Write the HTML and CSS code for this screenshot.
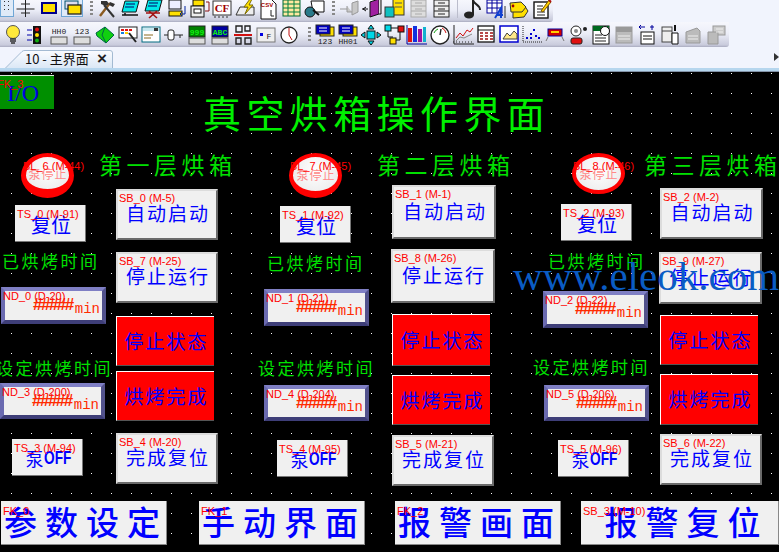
FILE: index.html
```html
<!DOCTYPE html>
<html lang="zh">
<head>
<meta charset="utf-8">
<title>主界面</title>
<link rel="stylesheet" href="styles.css">
</head>
<body>
<div class="app">
<header class="toolbars">
<div class="bar bar-top">
<div class="tool sel narrow"><svg viewBox="0 0 22 22"><g fill="#333"><rect x="0" y="-1" width="1" height="1"/><rect x="4" y="-1" width="1" height="1"/><rect x="8" y="-1" width="1" height="1"/><rect x="0" y="3" width="1" height="1"/><rect x="4" y="3" width="1" height="1"/><rect x="8" y="3" width="1" height="1"/><rect x="0" y="7" width="1" height="1"/><rect x="4" y="7" width="1" height="1"/><rect x="8" y="7" width="1" height="1"/><rect x="0" y="11" width="1" height="1"/><rect x="4" y="11" width="1" height="1"/><rect x="8" y="11" width="1" height="1"/></g></svg></div>
<div class="tool"><svg viewBox="0 0 22 22"><path d="M1.500 11h18M10.500 2v17M6 6h9M6 15h9" stroke="#222" fill="none"/></svg></div>
<div class="tool"><svg viewBox="0 0 22 22"><rect x="4" y="5" width="14" height="10" fill="#ffe000" stroke="#00008c" stroke-width="2"/></svg></div>
<div class="tool sel"><svg viewBox="0 0 22 22"><rect x="4" y="3" width="13" height="8" fill="#dde" stroke="#00506c"/><rect x="7" y="7" width="13" height="9" fill="#ffe000" stroke="#222" stroke-width="1.300"/></svg></div>
<i class="grip"></i>
<div class="tool"><svg viewBox="0 0 22 22"><path d="M4 18L14 5" stroke="#8a5a20" stroke-width="2.400"/><path d="M18 19L8 7" stroke="#333" stroke-width="2"/><path d="M5 3h6l2 3-3 2-5-2zM14 4l5 2-2 3-4-2z" fill="#333"/></svg></div>
<div class="tool"><svg viewBox="0 0 22 22"><path d="M6 3h14l-3 11H3z" fill="#00e8e8" stroke="#111"/><path d="M7 6h9M6 9h9" stroke="#006"/><path d="M3 17h16M6 15v2" stroke="#111" stroke-width="1.500"/></svg></div>
<div class="tool"><svg viewBox="0 0 22 22"><path d="M6 2h14l-3 11H3z" fill="#00e8e8" stroke="#111"/><path d="M7 5h9M6 8h9" stroke="#006"/><path d="M4 15h14M7 13l8 7M15 13l-8 7" stroke="#a01010" stroke-width="1.600"/></svg></div>
<div class="tool"><svg viewBox="0 0 22 22"><rect x="4" y="2" width="12" height="9" fill="#eef" stroke="#111"/><rect x="4" y="13" width="13" height="5" fill="#ffe000" stroke="#111"/><path d="M20 8v8h-3M17 14l-2 2 2 2" stroke="#00209c" fill="none"/></svg></div>
<div class="tool"><svg viewBox="0 0 22 22"><rect x="5" y="2" width="11" height="6" fill="#ffe000" stroke="#111"/><rect x="3" y="8" width="13" height="11" fill="#eee" stroke="#111"/><rect x="6" y="11" width="7" height="4" fill="#fff" stroke="#111"/><path d="M18 4h3v9h-4" stroke="#8c1010" fill="none"/></svg></div>
<div class="tool"><svg viewBox="0 0 22 22"><rect x="2" y="3" width="18" height="14" fill="#fff" stroke="#333"/><text class="ico-cf" x="11" y="14">CF</text><path d="M4 18v2M8 18v2M12 18v2M16 18v2" stroke="#333"/></svg></div>
<div class="tool"><svg viewBox="0 0 22 22"><path d="M2 17l4-8h14v8z" fill="#eee" stroke="#333"/><path d="M16 1l-6 8h4l-3 7 8-9h-4l3-6z" fill="#ffe000" stroke="#7a6a00"/></svg></div>
<div class="tool"><svg viewBox="0 0 22 22"><path d="M4 1h10l5 5v15H4z" fill="#fff" stroke="#111"/><text class="ico-csv" x="10" y="9">CSV</text><path d="M14 12v6h3" stroke="#222" fill="none"/></svg></div>
<div class="tool"><svg viewBox="0 0 22 22"><rect x="3" y="2" width="17" height="16" fill="#ffe9a0" stroke="#063"/><path d="M3 6h17M3 10h17M3 14h17M8 2v16M14 2v16" stroke="#008040"/></svg></div>
<div class="tool"><svg viewBox="0 0 22 22"><path d="M8 3h13v11H10z" fill="#fff" stroke="#111"/><circle cx="7" cy="14" r="5" fill="#2a7a8a" stroke="#111"/><path d="M10 12l6 5" stroke="#111" stroke-width="2"/></svg></div>
<i class="grip"></i>
<div class="tool"><svg viewBox="0 0 22 22"><path d="M2 11h7M9 8v6h5M14 5v12l6-3V3z" fill="#c8c8c8" stroke="#999"/></svg></div>
<div class="tool"><svg viewBox="0 0 22 22"><path d="M1 11h6M5 9l-3 2 3 2" stroke="#111" fill="none"/><path d="M9 4l9-3v15l-9 3z" fill="#a020a0" stroke="#111"/><path d="M18 1h2v15h-2" fill="#ddd" stroke="#111"/></svg></div>
<div class="tool"><svg viewBox="0 0 22 22"><rect x="9" y="1" width="11" height="16" fill="#ffe000" stroke="#333"/><path d="M11 5h7M11 9h7" stroke="#555"/><rect x="1" y="9" width="9" height="10" fill="#10c0c0" stroke="#333"/></svg></div>
<div class="tool"><svg viewBox="0 0 22 22"><rect x="4" y="2" width="15" height="17" fill="#ddd" stroke="#aaa"/><path d="M4 8h15M4 13h15M8 5h7M8 11h7M8 16h7" stroke="#aaa"/></svg></div>
<div class="tool"><svg viewBox="0 0 22 22"><rect x="4" y="2" width="15" height="17" fill="#eee" stroke="#222"/><path d="M4 8h15M4 13h15M8 5h7M8 11h7M8 16h7" stroke="#222"/></svg></div>
<i class="sep"></i>
<div class="tool"><svg viewBox="0 0 22 22"><ellipse cx="7" cy="17" rx="5" ry="3.400" fill="#222"/><path d="M11 17V2c1 5 7 4 7 10" stroke="#222" stroke-width="2" fill="none"/></svg></div>
<div class="tool"><svg viewBox="0 0 22 22"><rect x="2" y="2" width="15" height="13" fill="#fff" stroke="#00009c"/><path d="M2 5h15M7 2v13M12 2v13M2 10h15" stroke="#00009c"/><path d="M10 20l6-10v10M12 17h6" stroke="#1040d0" stroke-width="2" fill="none"/><path d="M20 8v12" stroke="#333"/></svg></div>
<div class="tool"><svg viewBox="0 0 22 22"><path d="M6 6l11-1 4 6-4 6-11 1z" fill="#ffe000" stroke="#333" transform="translate(-1 2)"/><path d="M2 5l11-1 5 5-4 5H3z" fill="#ffe000" stroke="#333"/><circle cx="5" cy="8" r="1.400" fill="#a00000"/></svg></div>
<div class="tool"><svg viewBox="0 0 22 22"><rect x="3" y="4" width="14" height="16" fill="#fff" stroke="#111" stroke-width="1.400"/><path d="M6 8h6M6 11h8M6 14h8M6 17h8" stroke="#222"/><path d="M10 13L18 2l2 2-8 10z" fill="#ffd000" stroke="#7a5500"/><path d="M18 2l2 2" stroke="#b01010" stroke-width="2"/></svg></div>
</div>
<div class="bar bar-bottom">
<i class="pad"></i>
<div class="tool"><svg viewBox="0 0 22 22"><circle cx="11" cy="8" r="6.500" fill="#ffe83a" stroke="#555"/><path d="M8 15h6M8 17h6M9 19h4" stroke="#333" stroke-width="1.300"/></svg></div>
<div class="tool"><svg viewBox="0 0 22 22"><rect x="8" y="2" width="8" height="18" fill="#111"/><circle cx="12" cy="5.500" r="2" fill="#e01010"/><circle cx="12" cy="11" r="2" fill="#ffe000"/><circle cx="12" cy="16.500" r="2" fill="#10b010"/><path d="M2 6h5M2 11h5M2 16h5" stroke="#00a"/></svg></div>
<div class="tool"><svg viewBox="0 0 22 22"><text class="ico-k" x="11" y="10">HH0</text><rect x="3" y="13" width="16" height="7" fill="#ddd" stroke="#555"/></svg></div>
<div class="tool"><svg viewBox="0 0 22 22"><text class="ico-k" x="11" y="10">123</text><rect x="3" y="13" width="16" height="7" fill="#ddd" stroke="#555"/></svg></div>
<div class="tool"><svg viewBox="0 0 22 22"><path d="M2 9l9-6 9 8-8 8-9-7z" fill="#10d010" stroke="#064"/><path d="M11 3l-3 8 4 8" stroke="#064" fill="none"/></svg></div>
<div class="tool"><svg viewBox="0 0 22 22"><rect x="2" y="3" width="18" height="11" fill="#fff" stroke="#222"/><path d="M4 6h3M8 6h3M12 6h3" stroke="#e01010" stroke-width="2"/><path d="M4 9h3" stroke="#1080e0" stroke-width="2"/><path d="M8 9h3" stroke="#ffd000" stroke-width="2"/><path d="M12 9l7 9" stroke="#222" stroke-width="2"/></svg></div>
<div class="tool"><svg viewBox="0 0 22 22"><rect x="2" y="3" width="18" height="15" fill="#fff" stroke="#006a80"/><rect x="3" y="4" width="16" height="3" fill="#c8e8f0"/><path d="M4 11h9M4 14h7" stroke="#8a6a20"/><rect x="14" y="4" width="4" height="3" fill="#333"/></svg></div>
<div class="tool"><svg viewBox="0 0 22 22"><rect x="5" y="6" width="6" height="10" rx="2" fill="#fff" stroke="#222"/><path d="M1 11h4M11 11h9M17 11v3" stroke="#222"/></svg></div>
<div class="tool"><svg viewBox="0 0 22 22"><rect x="3" y="2" width="16" height="11" fill="#008000" stroke="#222"/><text class="ico-t" x="11" y="11" fill="#10f010">999</text><rect x="3" y="14" width="16" height="6" fill="#ddd" stroke="#555"/></svg></div>
<div class="tool"><svg viewBox="0 0 22 22"><rect x="3" y="2" width="16" height="11" fill="#0000a0" stroke="#222"/><text class="ico-t" x="11" y="11" fill="#10f010">ABC</text><rect x="3" y="14" width="16" height="6" fill="#ddd" stroke="#555"/></svg></div>
<div class="tool"><svg viewBox="0 0 22 22"><path d="M4 2h6v6H4zM13 2h5v5h-5zM4 14h5v6H4zM13 14h6v6h-6z" fill="none" stroke="#222" stroke-width="1.400"/><path d="M2 11h18" stroke="#d01010" stroke-width="2"/></svg></div>
<div class="tool"><svg viewBox="0 0 22 22"><rect x="2" y="4" width="18" height="14" fill="#eee" stroke="#777"/><rect x="5" y="9" width="3" height="3" fill="#0000e0"/><text class="ico-k" x="14" y="15">F</text></svg></div>
<div class="tool"><svg viewBox="0 0 22 22"><circle cx="11" cy="11" r="8" fill="#fff" stroke="#222" stroke-width="1.300"/><path d="M11 4v7l3 5" stroke="#c01010" fill="none"/></svg></div>
<i class="grip"></i>
<div class="tool"><svg viewBox="0 0 22 22"><rect x="6" y="3" width="14" height="9" fill="#ffe000" stroke="#222"/><rect x="2" y="1" width="14" height="9" fill="#0000c0" stroke="#222"/><path d="M5 4h8M5 7h8" stroke="#fff"/><text class="ico-k" x="11" y="20">123</text></svg></div>
<div class="tool"><svg viewBox="0 0 22 22"><rect x="6" y="3" width="14" height="9" fill="#ffe000" stroke="#222"/><rect x="2" y="1" width="14" height="9" fill="#0000c0" stroke="#222"/><path d="M5 4h8M5 7h8" stroke="#fff"/><text class="ico-k" x="11" y="20">HH01</text></svg></div>
<div class="tool"><svg viewBox="0 0 22 22"><rect x="7" y="7" width="8" height="8" fill="#00d8e8" stroke="#111"/><path d="M11 1l3 4H8zM11 21l3-4H8zM1 11l4-3v6zM21 11l-4-3v6z" fill="#00d8e8" stroke="#111"/></svg></div>
<div class="tool"><svg viewBox="0 0 22 22"><rect x="2" y="1" width="6" height="6" fill="#00d8e8" stroke="#111"/><path d="M8 4h7M5 7v6h5M17 8v8h-4" stroke="#111" fill="none"/><rect x="15" y="2" width="6" height="6" fill="#e01010" stroke="#111"/><rect x="7" y="14" width="6" height="6" fill="#ffe000" stroke="#111"/></svg></div>
<div class="tool"><svg viewBox="0 0 22 22"><rect x="2" y="4" width="4" height="14" fill="#e01010"/><rect x="7" y="2" width="4" height="16" fill="#1030e0"/><rect x="12" y="5" width="4" height="13" fill="#a010a0"/><rect x="17" y="3" width="3" height="15" fill="#10b0d0"/><path d="M1 1v19h20" stroke="#00009c" fill="none"/></svg></div>
<div class="tool"><svg viewBox="0 0 22 22"><circle cx="11" cy="11" r="9" fill="#fff" stroke="#222" stroke-width="1.400"/><path d="M5 9a7 7 0 0 1 4-4" stroke="#10a010" fill="none"/><path d="M13 4a7 7 0 0 1 4 5" stroke="#d01010" fill="none"/><path d="M11 11l1-6" stroke="#222" stroke-width="1.400"/></svg></div>
<div class="tool"><svg viewBox="0 0 22 22"><path d="M2 1v19h20" stroke="#222" fill="none"/><path d="M4 14l4-5 3 3 4-6 3 2 3-4" stroke="#d01010" fill="none"/><path d="M4 17l4-4 4 1 8-4" stroke="#888" fill="none"/><path d="M1 18h20" stroke="#222" stroke-dasharray="1 2"/></svg></div>
<div class="tool"><svg viewBox="0 0 22 22"><rect x="3" y="2" width="16" height="16" fill="#fff" stroke="#111" stroke-width="1.300"/><path d="M3 6h16" stroke="#111"/><path d="M5 9h3M10 9h3M15 9h3M5 12h3M10 12h3M15 12h3M5 15h3M10 15h3M15 15h3" stroke="#a01010" stroke-width="1.500"/></svg></div>
<div class="tool"><svg viewBox="0 0 22 22"><rect x="2" y="2" width="18" height="16" fill="#fff" stroke="#0000d0" stroke-width="1.500"/><path d="M5 15l4-6 3 3 4-5 3 3v5H5z" fill="#ffe98a" stroke="#444"/></svg></div>
<div class="tool"><svg viewBox="0 0 22 22"><path d="M2 2v16h19" stroke="#222" stroke-dasharray="1 1" fill="none"/><g fill="#0000d0"><rect x="5" y="13" width="2" height="2"/><rect x="9" y="9" width="2" height="2"/><rect x="12" y="5" width="2" height="2"/><rect x="14" y="11" width="2" height="2"/><rect x="17" y="13" width="2" height="2"/><rect x="9" y="13" width="2" height="2"/></g></svg></div>
<div class="tool"><svg viewBox="0 0 22 22"><rect x="4" y="5" width="14" height="7" fill="#d00000" stroke="#00009c"/><rect x="7" y="7" width="8" height="2" fill="#ffd000"/><path d="M4 13l-2 4M18 13l2 4" stroke="#777"/></svg></div>
<div class="tool"><svg viewBox="0 0 22 22"><circle cx="9" cy="7" r="5" fill="#fff" stroke="#222"/><circle cx="9" cy="7" r="2" fill="#888"/><rect x="4" y="14" width="11" height="6" rx="2" fill="#e01010" stroke="#222"/><rect x="16" y="3" width="4" height="4" rx="2" fill="#222"/></svg></div>
<div class="tool"><svg viewBox="0 0 22 22"><rect x="3" y="2" width="16" height="18" fill="#fff" stroke="#111"/><rect x="3" y="2" width="16" height="5" fill="#006a20"/><circle cx="15" cy="7" r="4.500" fill="#fff" stroke="#111"/><path d="M5 11h7M5 14h11M5 17h11" stroke="#222"/></svg></div>
<div class="tool"><svg viewBox="0 0 22 22"><rect x="3" y="3" width="16" height="16" fill="#bbb" stroke="#999"/><rect x="3" y="3" width="16" height="5" fill="#999"/><path d="M5 12h12M5 15h12" stroke="#eee"/></svg></div>
<div class="tool"><svg viewBox="0 0 22 22"><rect x="5" y="8" width="13" height="12" fill="#fff" stroke="#111"/><path d="M7 12h9M7 15h9" stroke="#111"/><path d="M3 3h6M3 3l2-2M3 3l2 2" stroke="#00009c" fill="none"/><path d="M16 1v5M14 3h4" stroke="#00009c"/></svg></div>
<div class="tool"><svg viewBox="0 0 22 22"><rect x="3" y="3" width="10" height="15" fill="#eee" stroke="#444"/><path d="M3 7h10" stroke="#444"/><path d="M13 9h6v11h-6z" fill="#fff" stroke="#111"/><path d="M16 1v6" stroke="#111" stroke-width="2"/></svg></div>
<div class="tool"><svg viewBox="0 0 22 22"><path d="M4 8l11-4 3 3v12H4z" fill="#bbb" stroke="#999"/><path d="M6 12h10M6 15h10" stroke="#eee"/></svg></div>
<div class="tool"><svg viewBox="0 0 22 22"><rect x="8" y="2" width="12" height="9" fill="#ccc" stroke="#999"/><path d="M3 8h10v12H3z" fill="#bbb" stroke="#999"/><path d="M11 5h7M11 8h7" stroke="#eee"/></svg></div>
</div>
</header>
<nav class="tabs">
<div class="tab">
<svg class="tab-shape" viewBox="0 0 108 18" aria-hidden="true"><defs><linearGradient id="tabfill" x1="0" y1="0" x2="0" y2="1"><stop offset="0" stop-color="#fbfcff"/><stop offset="1" stop-color="#dbe8f6"/></linearGradient></defs><path d="M0.500 18L17 1.500Q18 0.500 20 0.500H105Q107.500 0.500 107.500 3V18" fill="url(#tabfill)" stroke="#a3bad2"/></svg>
<span class="tab-t">10 - 主界面</span><span class="tab-x">×</span>
</div>
<span class="tab-more"></span>
</nav>
<main class="canvas">
<svg class="dots" aria-hidden="true"><defs><pattern id="dot" width="20" height="20" patternUnits="userSpaceOnUse" x="10" y="0"><rect x="1" y="1" width="1" height="1" fill="#fff"/></pattern></defs><rect width="100%" height="100%" fill="url(#dot)"/></svg>

<div class="item io"><span class="tag">FK_3</span><span class="io-t">I/O</span></div>
<h1 class="item title">真空烘箱操作界面</h1>
<h2 class="item head h1">第一层烘箱</h2>
<h2 class="item head h2">第二层烘箱</h2>
<h2 class="item head h3">第三层烘箱</h2>

<div class="item lamp l1"><span class="lamp-t">泵停止</span><span class="tag">BL_6 (M-44)</span></div>
<div class="item lamp l2"><span class="lamp-t">泵停止</span><span class="tag">BL_7 (M-45)</span></div>
<div class="item lamp l3"><span class="lamp-t">泵停止</span><span class="tag">BL_8 (M-46)</span></div>

<div class="item flat t1"><span class="txt txt-m">复位</span><span class="tag">TS_0 (M-91)</span></div>
<div class="item flat t2"><span class="txt txt-m">复位</span><span class="tag">TS_1 (M-92)</span></div>
<div class="item flat t3"><span class="txt txt-m">复位</span><span class="tag">TS_2 (M-93)</span></div>
<div class="item flat t4"><span class="txt txt-s">泵<b class="off">OFF</b></span><span class="tag">TS_3 (M-94)</span></div>
<div class="item flat t5"><span class="txt txt-s">泵<b class="off">OFF</b></span><span class="tag">TS_4 (M-95)</span></div>
<div class="item flat t6"><span class="txt txt-s">泵<b class="off">OFF</b></span><span class="tag">TS_5 (M-96)</span></div>

<div class="item btn b1"><span class="txt">自动启动</span><span class="tag">SB_0 (M-5)</span></div>
<div class="item btn b2"><span class="txt">停止运行</span><span class="tag">SB_7 (M-25)</span></div>
<div class="item btn b3"><span class="txt">完成复位</span><span class="tag">SB_4 (M-20)</span></div>
<div class="item btn b4"><span class="txt">自动启动</span><span class="tag">SB_1 (M-1)</span></div>
<div class="item btn b5"><span class="txt">停止运行</span><span class="tag">SB_8 (M-26)</span></div>
<div class="item btn b6"><span class="txt">完成复位</span><span class="tag">SB_5 (M-21)</span></div>
<div class="item btn b7"><span class="txt">自动启动</span><span class="tag">SB_2 (M-2)</span></div>
<div class="item btn b8"><span class="txt">停止运行</span><span class="tag">SB_9 (M-27)</span></div>
<div class="item btn b9"><span class="txt">完成复位</span><span class="tag">SB_6 (M-22)</span></div>

<div class="item red r1"><span class="txt">停止状态</span></div>
<div class="item red r2"><span class="txt">烘烤完成</span></div>
<div class="item red r3"><span class="txt">停止状态</span></div>
<div class="item red r4"><span class="txt">烘烤完成</span></div>
<div class="item red r5"><span class="txt">停止状态</span></div>
<div class="item red r6"><span class="txt">烘烤完成</span></div>

<div class="item label a1">已烘烤时间</div>
<div class="item label a2">已烘烤时间</div>
<div class="item label a3">已烘烤时间</div>
<div class="item label s1">设定烘烤时间</div>
<div class="item label s2">设定烘烤时间</div>
<div class="item label s3">设定烘烤时间</div>

<div class="item num n1"><span class="hash">#####</span><span class="unit">min</span><span class="tag">ND_0 (D-20)</span></div>
<div class="item num n2"><span class="hash">#####</span><span class="unit">min</span><span class="tag">ND_1 (D-21)</span></div>
<div class="item num n3"><span class="hash">#####</span><span class="unit">min</span><span class="tag">ND_2 (D-22)</span></div>
<div class="item num n4"><span class="hash">#####</span><span class="unit">min</span><span class="tag">ND_3 (D-200)</span></div>
<div class="item num n5"><span class="hash">#####</span><span class="unit">min</span><span class="tag">ND_4 (D-204)</span></div>
<div class="item num n6"><span class="hash">#####</span><span class="unit">min</span><span class="tag">ND_5 (D-206)</span></div>

<div class="item big f1"><span class="big-t">参数设定</span><span class="tag">FK_0</span></div>
<div class="item big f2"><span class="big-t">手动界面</span><span class="tag">FK_1</span></div>
<div class="item big f3"><span class="big-t">报警画面</span><span class="tag">FK_2</span></div>
<div class="item big f4"><span class="big-t">报警复位</span><span class="tag">SB_3 (M-10)</span></div>

<div class="item mark">www.eleok.com</div>
</main>
</div>
</body>
</html>
```

FILE: styles.css
```css
* { box-sizing: border-box; }
html, body { margin: 0; padding: 0; height: 100%; overflow: hidden; }
body { font-family: "Noto Sans CJK SC", "Liberation Sans", sans-serif; background: #f1f4fd; }
.app { width: 779px; height: 552px; display: flex; flex-direction: column; overflow: hidden; }

.toolbars { display: flex; flex-direction: column; height: 47px; background: #f1f4fd; flex: none; }
.bar { display: flex; align-items: center; background: linear-gradient(#f6f7fd 0%, #eceef8 45%, #c9cbdc 92%, #a9abbf 100%); border-radius: 0 0 3px 0; }
.bar-top { width: 553px; height: 22px; gap: 1px; padding-bottom: 4px; }
.bar-bottom { width: 729px; height: 25px; gap: 1px; }
.tool { width: 22px; height: 22px; flex: none; }
.tool svg { display: block; width: 22px; height: 22px; overflow: hidden; }
.tool.narrow { width: 14px; }
.tool.sel { height: 19px; margin-top: -3px; background: #dfeaf8; outline: 1px solid #6fa6d6; outline-offset: -1px; }
.pad { width: 1px; flex: none; }
.grip { width: 3px; height: 16px; margin: 0 2px 0 6px; flex: none; background: repeating-linear-gradient(#888 0 2px, transparent 2px 4px); }
.bar-bottom .grip { margin-left: 7px; }
.sep { width: 1px; height: 18px; margin: 0 3px 0 4px; background: #bbbdcc; flex: none; }
.ico-t { font: bold 8px "Liberation Mono", monospace; text-anchor: middle; }
.ico-k { font: 8px "Liberation Mono", monospace; text-anchor: middle; fill: #222; }
.ico-cf { font: bold 11px "Liberation Serif", serif; text-anchor: middle; fill: #a00000; }
.ico-csv { font: bold 6px "Liberation Sans", sans-serif; text-anchor: middle; fill: #a00000; }

.tabs { height: 24px; flex: none; background: #f1f4fd; border-bottom: 3px solid #b6d6ee; position: relative; }
.tab { position: absolute; left: 5px; bottom: 0; height: 18px; width: 108px; }
.tab-shape { position: absolute; left: 0; top: 0; width: 108px; height: 18px; }
.tab-t { position: absolute; left: 20px; top: 0; font-size: 13px; line-height: 17px; color: #111; white-space: nowrap; }
.tab-x { position: absolute; left: 92px; top: 0; font: 700 17px/18px "Liberation Sans", sans-serif; color: #222; }
.tab-more { position: absolute; right: 0; top: 6px; width: 0; height: 0; border-left: 5px solid #333; border-top: 4px solid transparent; border-bottom: 4px solid transparent; }

.canvas { position: relative; flex: 1; background: #000; border-top: 1px solid #8494a8; overflow: hidden; }
.dots { position: absolute; left: 0; top: 0; width: 100%; height: 100%; }

.item { position: absolute; margin: 0; }
.tag { position: absolute; left: 2px; top: 2px; font: 11px/12px "Liberation Sans", sans-serif; color: #ff0000; white-space: nowrap; }
.txt { color: #0000ff; font-size: 19px; letter-spacing: 2px; margin-left: 2px; white-space: nowrap; }

.io { left: 0; top: 3px; width: 54px; height: 34px; background: #008f00; border-top: 1px solid #d8e8d8; display: flex; align-items: center; padding-left: 7px; }
.io-t { font: 24px "Liberation Serif", serif; color: #0000e0; margin-top: 2px; }
.io .tag { left: -3px; top: 2px; }

.title { left: 203px; top: 19px; width: 350px; font-size: 38px; line-height: 42px; letter-spacing: 5.400px; color: #00f000; font-weight: 400; white-space: nowrap; }
.head { top: 79px; font-size: 23px; line-height: 26px; letter-spacing: 4.500px; color: #00e000; font-weight: 400; white-space: nowrap; }
.h1 { left: 99px; } .h2 { left: 377px; } .h3 { left: 644px; }

.lamp { width: 53px; height: 45px; top: 81px; border-radius: 50%; border: solid #ff0000; background: radial-gradient(circle at 50% 40%, #fff, #e8e8e8); display: flex; align-items: center; justify-content: center; }
.lamp-t { color: #ff8a8a; font-size: 12px; letter-spacing: 1px; white-space: nowrap; margin-left: 1px; }
.lamp .tag { position: absolute; }
.l1 { left: 21px; border-width: 4px 5px 9px 5px; }
.l2 { left: 289px; border-width: 4px 4px 7px 4px; }
.l3 { left: 572px; height: 41px; border-width: 4px; }
.l1 .tag { left: -3px; top: 3px; }
.l2 .tag { left: -3px; top: 3px; }
.l3 .tag { left: -3px; top: 3px; }

.flat { width: 71px; height: 37px; background: #f0f0f0; border-right: 1px solid #777; border-bottom: 1px solid #777; display: flex; align-items: center; justify-content: center; padding-top: 2px; }
.flat .tag { left: 2px; top: 3px; }
.txt-m { font-size: 20px; letter-spacing: 0; }
.txt-s { font-size: 18px; letter-spacing: 0; display: flex; align-items: center; }
.off { display: inline-block; font: 700 19px "Liberation Sans", sans-serif; transform: scaleX(.72); transform-origin: left center; margin-right: -11px; }
.t1 { left: 15px; top: 133px; } .t2 { left: 280px; top: 134px; } .t3 { left: 561px; top: 132px; }
.t4 { left: 12px; top: 367px; } .t5 { left: 277px; top: 368px; } .t6 { left: 558px; top: 368px; }

.btn { width: 102px; height: 51px; background: #f0f0f0; border: 2px solid; border-color: #dcdcdc #6a6a6a #6a6a6a #dcdcdc; display: flex; align-items: center; justify-content: center; padding-bottom: 4px; }
.btn .tag { left: 1px; top: 1px; }
.b1 { left: 116px; top: 117px; } .b2 { left: 116px; top: 180px; } .b3 { left: 116px; top: 361px; }
.b4 { left: 392px; top: 113px; width: 104px; height: 54px; } .b5 { left: 391px; top: 177px; width: 104px; height: 54px; } .b6 { left: 392px; top: 363px; }
.b7 { left: 660px; top: 116px; width: 103px; } .b8 { left: 659px; top: 180px; width: 103px; height: 52px; } .b9 { left: 660px; top: 362px; }

.red { width: 98px; height: 50px; background: #ff0000; border-top: 1px solid #fff; border-left: 1px solid #fff; border-bottom: 1px solid #555; display: flex; align-items: center; justify-content: center; padding-bottom: 2px; }
.r1 { left: 116px; top: 244px; } .r2 { left: 116px; top: 299px; }
.r3 { left: 392px; top: 242px; height: 52px; } .r4 { left: 392px; top: 303px; }
.r5 { left: 660px; top: 243px; } .r6 { left: 660px; top: 302px; height: 51px; }

.label { font-size: 17px; line-height: 22px; letter-spacing: 2.500px; color: #00e000; white-space: nowrap; }
.a1 { left: 2px; top: 178px; } .a2 { left: 267px; top: 180px; } .a3 { left: 548px; top: 178px; }
.s1 { left: -4px; top: 285px; } .s2 { left: 258px; top: 285px; } .s3 { left: 533px; top: 284px; }

.num { width: 105px; height: 37px; background: #f0f0f0; border: 4px solid; border-color: #7f7fc4 #52528c #3e3e78 #6a6ab0; }
.hash { position: absolute; left: 28px; top: 2px; font: 700 17px/24px "Liberation Sans", sans-serif; color: #ff2a00; letter-spacing: -1.500px; }
.unit { position: absolute; right: 2px; top: 10px; font: 14px/16px "Liberation Mono", monospace; color: #ff2a00; }
.num .tag { left: -2px; top: -1px; }
.n1 { left: 1px; top: 215px; } .n2 { left: 264px; top: 217px; } .n3 { left: 543px; top: 219px; }
.n4 { left: 0; top: 311px; height: 36px; } .n5 { left: 264px; top: 313px; height: 36px; } .n6 { left: 544px; top: 313px; height: 36px; }

.big { width: 166px; height: 44px; background: #f0f0f0; border-right: 1px solid #888; border-bottom: 1px solid #888; display: flex; align-items: center; justify-content: center; padding: 0 0 3px 5px; }
.big-t { color: #0000ff; font-size: 33px; letter-spacing: 8px; white-space: nowrap; font-weight: 500; }
.big .tag { left: 2px; top: 4px; }
.f1 { left: 1px; top: 429px; } .f2 { left: 199px; top: 429px; } .f3 { left: 395px; top: 429px; } .f4 { left: 581px; top: 429px; width: 198px; padding-left: 14px; }

.mark { left: 513px; top: 182px; font: 41px/44px "Liberation Serif", serif; color: #0a5cc4; white-space: nowrap; }
```
